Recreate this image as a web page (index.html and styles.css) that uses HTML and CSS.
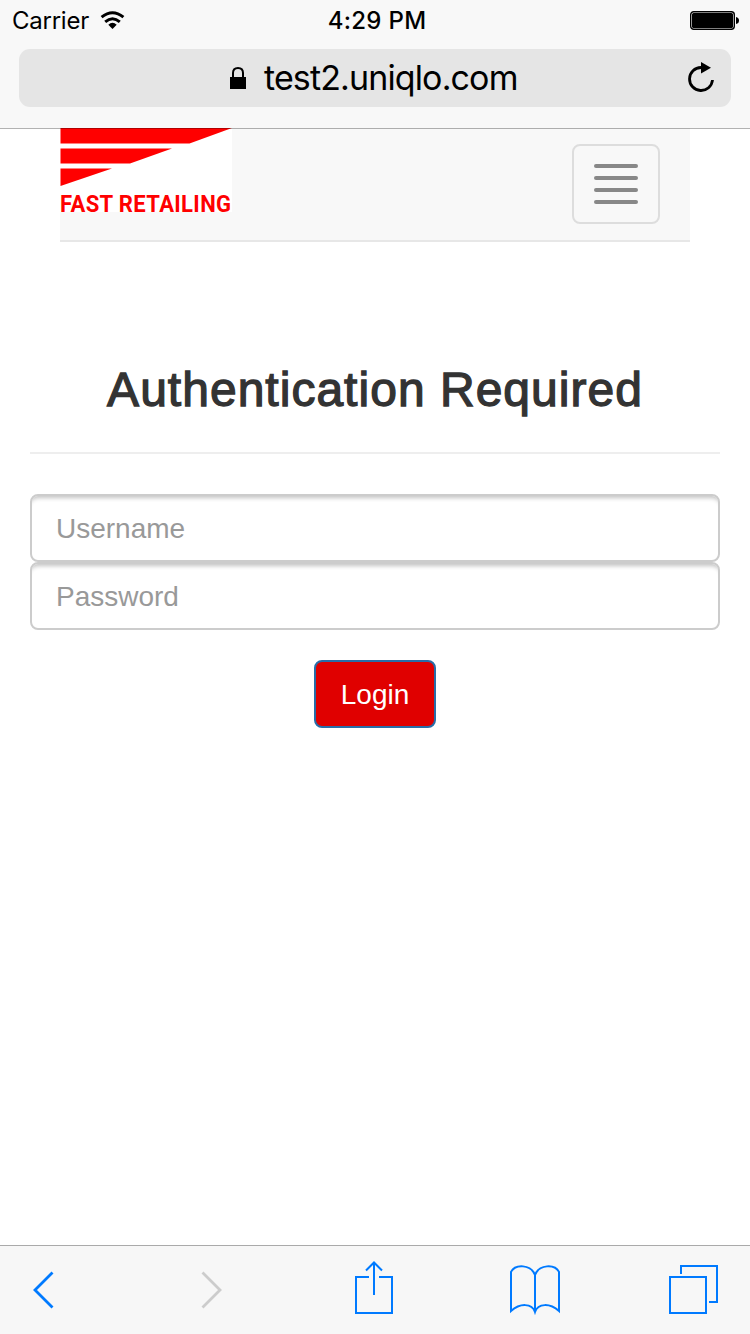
FILE: index.html
```html
<!DOCTYPE html>
<html lang="en">
<head>
<meta charset="utf-8">
<title>Authentication Required</title>
<link rel="stylesheet" href="styles.css">
</head>
<body>
<div class="screen">
  <header class="browser-bar">
    <div class="status">
      <div class="status-left">
        <span class="carrier">Carrier</span>
        <svg width="26" height="20" viewBox="0 0 26 20"><g fill="none" stroke="#000" stroke-width="3"><path d="M1.600 6.200Q12.500-2.800 23.400 6.200"/><path d="M5.200 10.800Q12.500 4.600 19.800 10.800"/></g><path d="M8.300 13.800Q12.500 9.800 16.700 13.800L12.500 18Z"/></svg>
      </div>
      <span class="clock">4:29 PM</span>
      <svg class="battery" width="50" height="20" viewBox="0 0 50 20"><rect x=".7" y=".7" width="43.600" height="17.600" rx="3" fill="#fff" stroke="#000" stroke-width="1.400"/><rect x="2" y="2" width="41" height="15" rx="1.500"/><path d="M46 6Q49 6.500 49 9.500T46 13Z"/></svg>
    </div>
    <div class="address">
      <svg class="lock" width="16" height="22" viewBox="0 0 16 22"><rect y="10" width="16" height="12"/><path d="M3 11V6Q3 1 8 1T13 6V11" fill="none" stroke="#000" stroke-width="2"/></svg>
      <span class="url">test2.uniqlo.com</span>
      <svg class="reload" width="28" height="32" viewBox="0 0 28 32"><path d="M14 5.500A11.500 11.500 0 1 0 25.500 18" fill="none" stroke="#000" stroke-width="2.800"/><path d="M14 0L24 5.700L14 11.500Z"/></svg>
    </div>
  </header>
  <main class="page">
    <nav class="navbar">
      <svg class="brand" width="172" height="84" viewBox="0 0 172 84"><rect width="172" height="84" fill="#fff"/><g fill="#f00"><path d="M.5 0H172L129.500 15.500H.5Z"/><path d="M.5 20.500H112L70 35.500H.5Z"/><path d="M.5 40.500H52L.5 58Z"/><text class="brand-text" transform="scale(.92 1)" x="0" y="83.600" textLength="186">FAST RETAILING</text></g></svg>
      <button class="toggle" aria-label="Menu"><span class="bar"></span><span class="bar"></span><span class="bar"></span><span class="bar"></span></button>
    </nav>
    <h1 class="title">Authentication Required</h1>
    <form class="login-form">
      <input class="field" type="text" placeholder="Username">
      <input class="field field-password" type="password" placeholder="Password">
      <button class="submit" type="button">Login</button>
    </form>
  </main>
  <footer class="toolbar">
    <svg width="22" height="38" viewBox="0 0 22 38"><path class="line thick" d="M20.500 1.500L3 19L20.500 36.500"/></svg>
    <svg class="forward" width="22" height="38" viewBox="0 0 22 38"><path class="line thick off" d="M1.500 1.500L19 19L1.500 36.500"/></svg>
    <svg class="share" width="40" height="54" viewBox="0 0 40 54"><path class="line" d="M15 16H2V52H38V16H25M20 34V2M12 9.500L20 1.500L28 9.500"/></svg>
    <svg class="book" width="52" height="50" viewBox="0 0 52 50"><path class="line" d="M26 10V47M26 10C22-1 6-1 2 7V46C11 38 23 38 26 47C29 38 41 38 50 46V7C46-1 30-1 26 10"/></svg>
    <svg class="tabs" width="50" height="50" viewBox="0 0 50 50"><path class="line" d="M1 13H37V49H1ZM12 10V2H48V38H40"/></svg>
  </footer>
</div>
</body>
</html>
```
FILE: styles.css
```css
* { box-sizing: border-box; }
body { margin: 0; background: #fff; }
svg { display: block; flex: none; overflow: visible; }
.screen { height: 1334px; display: flex; flex-direction: column; overflow: hidden; }
.browser-bar { position: relative; height: 128px; flex: none; background: #f8f8f8; box-shadow: 0 1px rgba(0,0,0,.3); padding: 0 19px; color: #000; font-family: Inter, sans-serif; }
.status { height: 49px; margin: 0 -9px 0 -7px; display: grid; grid-template-columns: 1fr auto 1fr; align-items: start; padding-top: 11px; }
.status-left { display: flex; gap: 10px; }
.carrier, .clock { font-size: 24px; line-height: 20px; }
.carrier { letter-spacing: -.25px; width: 78px; white-space: nowrap; }
.clock { font-weight: 550; letter-spacing: .3px; padding-left: 2px; }
.battery { justify-self: end; }
.address { height: 58px; border-radius: 11px; background: #e5e5e5; display: flex; align-items: center; padding: 0 16px 0 211px; }
.url { font-size: 34px; line-height: 58px; margin-left: 18px; letter-spacing: -.87px; white-space: nowrap; }
.reload { margin-left: auto; }
.page { flex: 1; padding: 0 30px; font-family: "Liberation Sans", sans-serif; }
.navbar { margin: 0 30px; height: 114px; background: #f8f8f8; border-bottom: 2px solid #e7e7e7; display: flex; justify-content: space-between; align-items: flex-start; padding-right: 30px; }
.brand-text { font: 700 24px Roboto, sans-serif; }
.toggle { margin: 16px 0 0; width: 88px; height: 80px; border: 2px solid #ddd; border-radius: 8px; background: transparent; padding: 18px 20px; display: flex; flex-direction: column; gap: 8px; }
.bar { width: 44px; height: 4px; border-radius: 2px; background: #888; }
.title { margin: 0; height: 212px; padding-top: 121px; border-bottom: 2px solid #eee; text-align: center; color: #333; font-size: 48px; line-height: 53px; font-weight: 400; letter-spacing: 1.02px; -webkit-text-stroke: 1.3px #333; white-space: nowrap; }
.login-form { padding-top: 40px; display: flex; flex-direction: column; }
.field { width: 100%; height: 68px; margin: 0; padding: 2px 24px 0; border: 2px solid #ccc; border-radius: 8px; background: #fff; box-shadow: inset 0 6px 4px -4px rgba(0,0,0,.24); font: 28px "Liberation Sans", sans-serif; outline: 0; }
.field::placeholder { color: #999; opacity: 1; }
.submit { align-self: center; margin: 30px 0 0; width: 122px; height: 68px; border: 2px solid #286da8; border-radius: 8px; background: #e00000; color: #fff; font: 28px "Liberation Sans", sans-serif; padding: 2px 0 0; }
.toolbar { height: 89px; flex: none; background: #f7f7f7; border-top: 1px solid #aaa; display: flex; align-items: flex-start; padding: 25px 31px 0 32px; }
.line { fill: none; stroke: #007aff; stroke-width: 2; }
.thick { stroke-width: 2.8; }
.off { stroke: #ccc; }
.forward { margin-left: 147px; }
.share { margin: -10px 0 0 131px; }
.book { margin: -6px 0 0 115px; }
.tabs { margin: -7px 0 0 auto; }
```
